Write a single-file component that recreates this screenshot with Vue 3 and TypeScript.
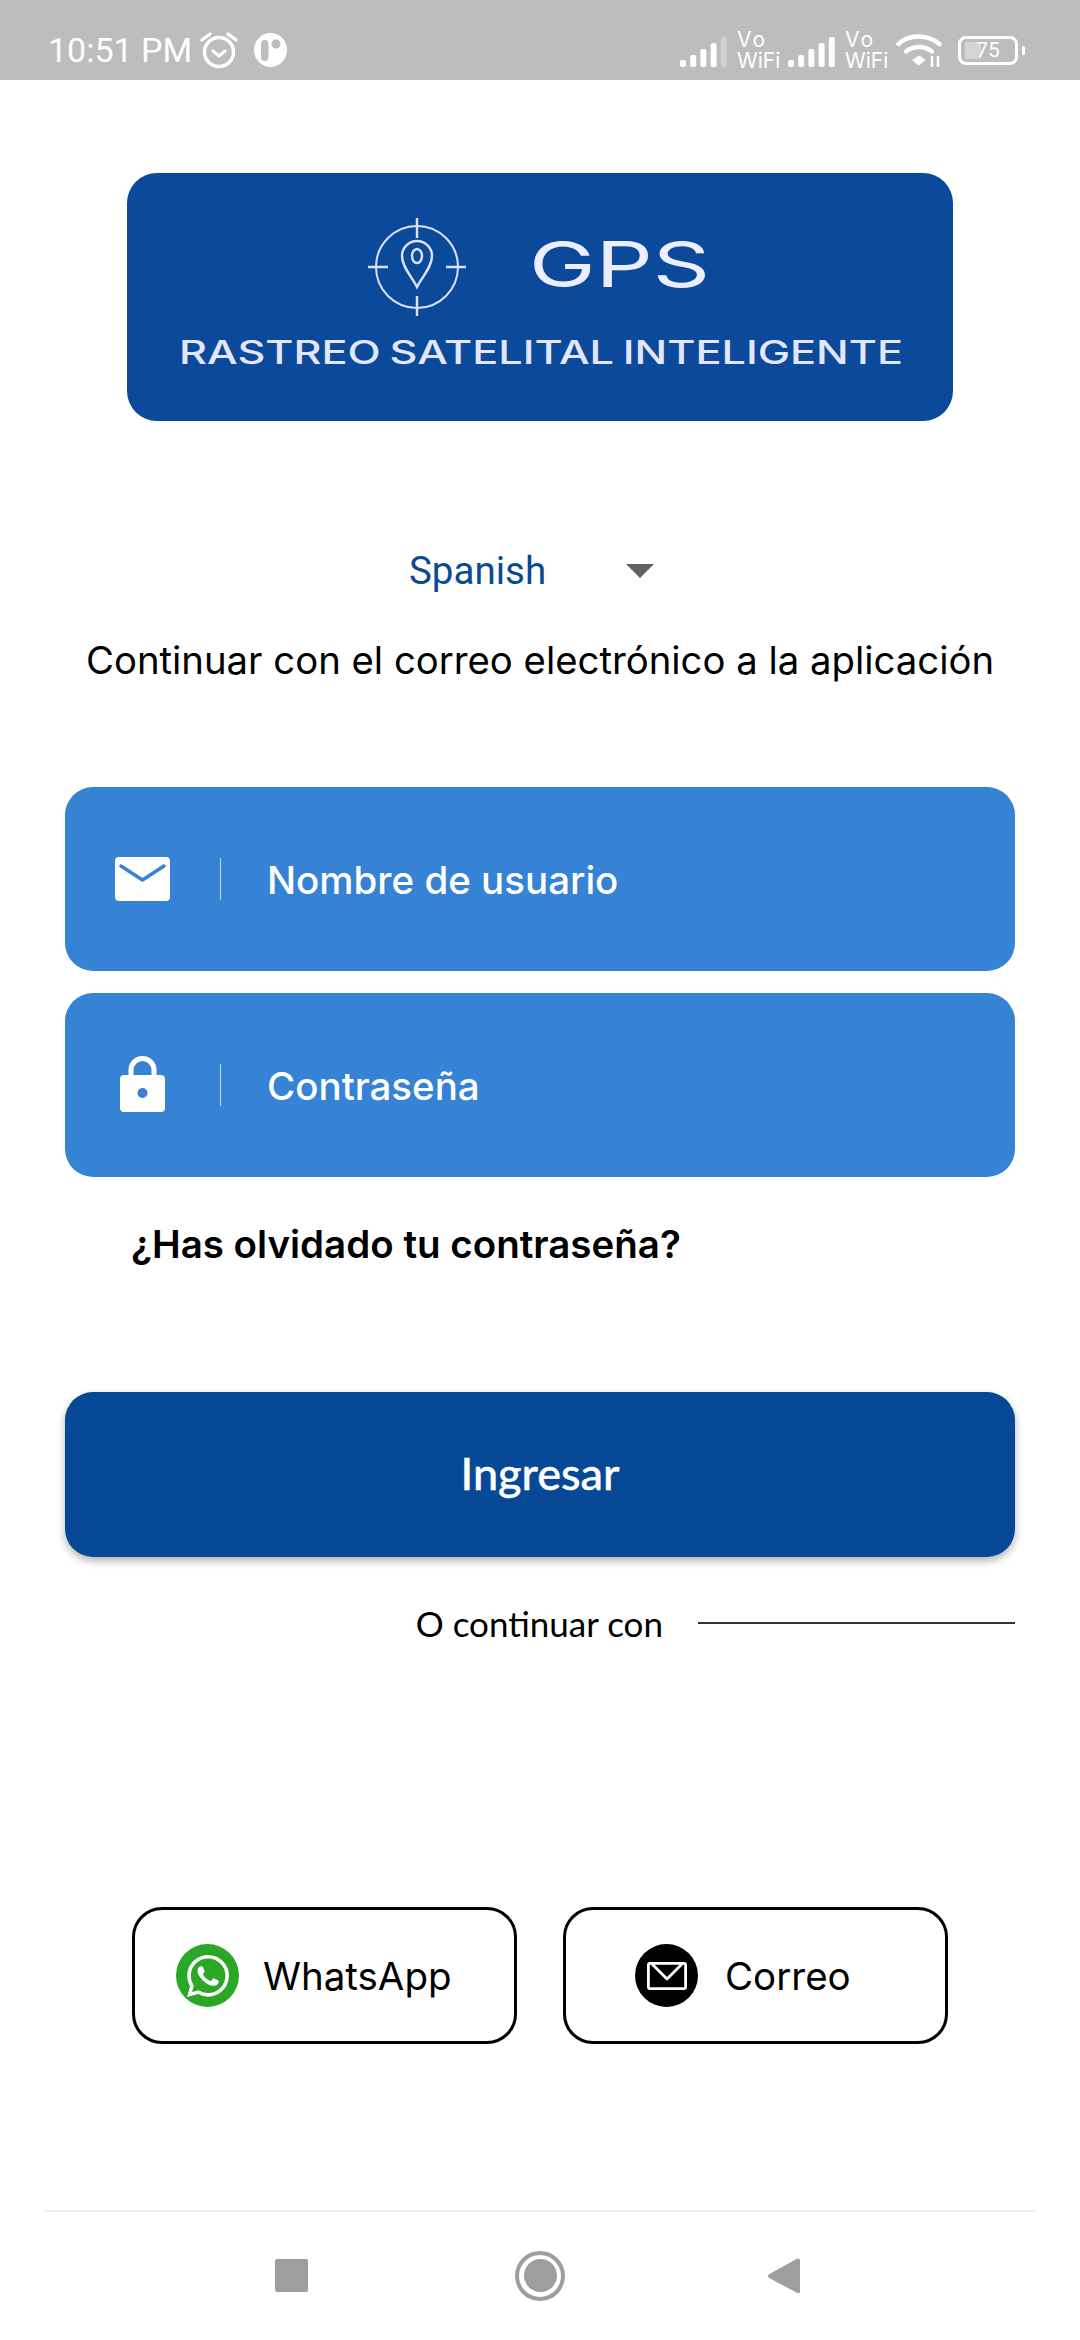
<script setup lang="ts">
const signalBars = [7, 12, 18, 24, 30]
</script>

<template>
  <div class="page">
    <header class="status">
      <div class="status-left">
        <span class="time">10:51 PM</span>
        <svg class="alarm" viewBox="0 0 40 38" fill="none" stroke="#fff">
          <circle cx="20" cy="21" r="14.5" stroke-width="3.4" />
          <path d="M14 20l6 5 6-5" stroke-width="3" stroke-linecap="round" stroke-linejoin="round" />
          <path d="M3 9l8-6M37 9l-8-6" stroke-width="3.4" stroke-linecap="round" />
        </svg>
        <svg class="dot-app" viewBox="0 0 33 34">
          <ellipse cx="16.5" cy="17" rx="16.5" ry="17" fill="#fff" />
          <rect x="7" y="7" width="7.5" height="21" rx="3.7" fill="#bdbdbd" />
          <circle cx="22" cy="11" r="4.5" fill="#bdbdbd" />
        </svg>
      </div>
      <div class="status-right">
        <svg class="signal" viewBox="0 0 47 30">
          <rect v-for="(h, i) in signalBars" :key="i" :x="i * 10.2" :y="30 - h" width="6" :height="h" rx="2" :fill="i === 4 ? '#d2d2d2' : '#fff'" />
        </svg>
        <div class="vo"><span class="vo-top">Vo</span><span>WiFi</span></div>
        <svg class="signal" viewBox="0 0 47 30">
          <rect v-for="(h, i) in signalBars" :key="i" :x="i * 10.2" :y="30 - h" width="6" :height="h" rx="2" fill="#fff" />
        </svg>
        <div class="vo"><span class="vo-top">Vo</span><span>WiFi</span></div>
        <svg class="wifi" viewBox="0 0 46 34" fill="none" stroke="#fff" stroke-linecap="round">
          <path d="M2.500 11C13 1 31 1 43.500 11" stroke-width="4.500" />
          <path d="M10 18.500c8-6 18-6 26 0" stroke-width="4.500" />
          <path d="M17 27l6-4 6 4-6 5z" fill="#fff" stroke-width="1" />
          <path d="M36 24v9M42 24v9" stroke-width="2.500" />
        </svg>
        <div class="battery">
          <div class="battery-body"><span class="battery-fill"></span><span class="battery-num">75</span></div>
          <span class="battery-nub"></span>
        </div>
      </div>
    </header>

    <main class="main">
      <div class="logo">
        <svg viewBox="0 0 826 248" width="826" height="248">
          <g fill="none" stroke="#dfe0ff" stroke-width="2">
            <circle cx="290" cy="94" r="41" />
            <path d="M290 45v20M290 123v20M241 94h20M319 94h20" stroke-width="2.4" />
            <path d="M290 114c-5-10-15-20-15-31a15 15 0 0 1 30 0c0 11-10 21-15 31z" stroke-width="2.4" />
            <ellipse cx="290" cy="83" rx="5" ry="7" stroke-width="2.4" />
          </g>
          <text x="402" y="114" class="gps" textLength="181" lengthAdjust="spacingAndGlyphs">GPS</text>
          <text x="52" y="191" class="tag" textLength="724" lengthAdjust="spacingAndGlyphs">RASTREO SATELITAL INTELIGENTE</text>
        </svg>
      </div>

      <div class="lang">
        <span class="lang-name">Spanish</span>
        <span class="caret"></span>
      </div>
      <p class="subtitle">Continuar con el correo electrónico a la aplicación</p>

      <div class="field first">
        <span class="field-icon">
          <svg width="55" height="44" viewBox="0 0 55 44">
            <rect width="55" height="44" rx="4" fill="#fff" />
            <path d="M6 9l21.500 14L49 9" fill="none" stroke="#3683d5" stroke-width="3.500" stroke-linecap="round" stroke-linejoin="round" />
          </svg>
        </span>
        <span class="field-sep"></span>
        <span class="field-label">Nombre de usuario</span>
      </div>
      <div class="field">
        <span class="field-icon lock">
          <svg width="45" height="57" viewBox="0 0 45 57">
            <path d="M11 24v-9a11.500 11.500 0 0 1 23 0v9" fill="none" stroke="#fff" stroke-width="5" />
            <rect y="20" width="45" height="37" rx="4" fill="#fff" />
            <circle cx="22.500" cy="38" r="5" fill="#3683d5" />
          </svg>
        </span>
        <span class="field-sep"></span>
        <span class="field-label">Contraseña</span>
      </div>

      <p class="forgot">¿Has olvidado tu contraseña?</p>

      <button class="submit" type="button">Ingresar</button>

      <div class="or">
        <span class="or-text">O continuar con</span>
        <span class="or-line"></span>
      </div>

      <div class="social">
        <div class="social-btn wa">
          <span class="badge green">
            <svg width="42" height="42" viewBox="0 0 24 24" fill="#fff">
              <path d="M17.472 14.382c-.297-.149-1.758-.867-2.03-.967-.273-.099-.471-.148-.67.15-.197.297-.767.966-.94 1.164-.173.199-.347.223-.644.075-.297-.15-1.255-.463-2.39-1.475-.883-.788-1.48-1.761-1.653-2.059-.173-.297-.018-.458.13-.606.134-.133.298-.347.446-.52.149-.174.198-.298.298-.497.099-.198.05-.371-.025-.52-.075-.149-.669-1.612-.916-2.207-.242-.579-.487-.5-.669-.51-.173-.008-.371-.01-.57-.01-.198 0-.52.074-.792.372-.272.297-1.04 1.016-1.04 2.479 0 1.462 1.065 2.875 1.213 3.074.149.198 2.096 3.2 5.077 4.487.709.306 1.262.489 1.694.625.712.227 1.36.195 1.871.118.571-.085 1.758-.719 2.006-1.413.248-.694.248-1.289.173-1.413-.074-.124-.272-.198-.57-.347m-5.421 7.403h-.004a9.87 9.87 0 01-5.031-1.378l-.361-.214-3.741.982.998-3.648-.235-.374a9.86 9.86 0 01-1.51-5.26c.001-5.45 4.436-9.884 9.888-9.884 2.64 0 5.122 1.03 6.988 2.898a9.825 9.825 0 012.893 6.994c-.003 5.45-4.437 9.884-9.885 9.884m8.413-18.297A11.815 11.815 0 0012.05 0C5.495 0 .16 5.335.157 11.892c0 2.096.547 4.142 1.588 5.945L.057 24l6.305-1.654a11.882 11.882 0 005.683 1.448h.005c6.554 0 11.89-5.335 11.893-11.893a11.821 11.821 0 00-3.48-8.413z" />
            </svg>
          </span>
          <span class="social-label">WhatsApp</span>
        </div>
        <div class="social-btn mail">
          <span class="badge black">
            <svg width="40" height="28" viewBox="0 0 40 28" fill="none" stroke="#fff" stroke-width="2.800">
              <rect x="1.400" y="1.400" width="37.200" height="25.200" rx="1.500" />
              <path d="M5 2l15 15L35 2" stroke-linejoin="round" />
            </svg>
          </span>
          <span class="social-label">Correo</span>
        </div>
      </div>
    </main>

    <nav class="nav">
      <span class="nav-square"></span>
      <span class="nav-home"><span class="nav-home-dot"></span></span>
      <svg class="nav-back" width="32" height="38" viewBox="0 0 32 38">
        <path d="M30 1.500c1 0 2 .8 2 2v31c0 1.400-1.300 2.300-2.500 1.600L1 21c-1.300-.8-1.300-3 0-3.800L29 1.800z" fill="#9e9e9e" />
      </svg>
    </nav>
  </div>
</template>

<style scoped>
.page {
  width: 1080px;
  height: 2340px;
  background: #fff;
  overflow: hidden;
  font-family: Inter, "Liberation Sans", sans-serif;
  color: #000;
}

.status {
  height: 80px;
  background: #bdbdbd;
  display: flex;
  justify-content: space-between;
  align-items: center;
  padding: 20px 55px 0 48px;
  box-sizing: border-box;
  color: #fff;
}
.status-left,
.status-right {
  display: flex;
  align-items: center;
}
.time {
  font-family: Roboto, sans-serif;
  font-size: 34px;
  line-height: 40px;
  width: 151px;
}
.alarm {
  width: 40px;
  height: 38px;
}
.dot-app {
  width: 33px;
  height: 34px;
  margin-left: 15px;
}
.signal {
  width: 47px;
  height: 30px;
  margin-top: 4px;
}
.vo {
  width: 41px;
  margin-left: 10px;
  margin-right: 10px;
  display: flex;
  flex-direction: column;
  font-family: Inter, sans-serif;
  font-size: 21px;
  line-height: 21px;
}
.vo-top {
  letter-spacing: 2px;
}
.wifi {
  width: 46px;
  height: 34px;
}
.battery {
  display: flex;
  align-items: center;
  margin-left: 16px;
}
.battery-body {
  width: 60px;
  height: 29px;
  border: 3px solid #fff;
  border-radius: 8px;
  box-sizing: border-box;
  position: relative;
  display: flex;
  align-items: center;
  justify-content: center;
}
.battery-fill {
  position: absolute;
  left: 4px;
  top: 3px;
  bottom: 3px;
  width: 16px;
  background: #d5d5d5;
}
.battery-num {
  position: relative;
  font-family: Roboto, sans-serif;
  font-size: 21px;
  line-height: 23px;
}
.battery-nub {
  width: 3px;
  height: 9px;
  margin-left: 4px;
  background: #fff;
  border-radius: 2px;
}

.main {
  padding: 0 65px;
  display: flex;
  flex-direction: column;
}
.logo {
  width: 826px;
  height: 248px;
  margin: 93px auto 0;
  background: #0b4a9a;
  border-radius: 30px;
  overflow: hidden;
}
.gps {
  font-family: Inter, sans-serif;
  font-size: 63px;
  font-weight: 400;
  fill: #eceeff;
}
.tag {
  font-family: Inter, sans-serif;
  font-size: 32px;
  font-weight: 500;
  word-spacing: -2px;
  fill: #e4e5ff;
}

.lang {
  margin-top: 118px;
  height: 60px;
  display: flex;
  align-items: center;
  padding-left: 344px;
}
.lang-name {
  font-family: Roboto, sans-serif;
  font-size: 38.5px;
  color: #0a4a8f;
  width: 217px;
  padding-top: 2px;
}
.caret {
  width: 0;
  height: 0;
  margin-top: 4px;
  border-left: 14px solid transparent;
  border-right: 14px solid transparent;
  border-top: 14px solid #616161;
}
.subtitle {
  margin: 31px 0 0;
  font-size: 38.3px;
  line-height: 60px;
  text-align: center;
  white-space: nowrap;
}

.field {
  height: 184px;
  margin-top: 22px;
  background: #3683d5;
  border-radius: 28px;
  display: flex;
  align-items: center;
  color: #fff;
}
.field.first {
  margin-top: 97px;
}
.field-icon {
  width: 155px;
  display: flex;
  justify-content: center;
  box-sizing: border-box;
}
.field-icon.lock {
  margin-top: -3px;
}
.field-sep {
  width: 1px;
  height: 42px;
  background: rgba(255, 255, 255, 0.7);
}
.field-label {
  margin-left: 46px;
  padding-top: 2px;
  font-size: 38.5px;
  font-weight: 500;
}

.forgot {
  margin: 37px 0 0 66px;
  font-size: 38.5px;
  font-weight: 600;
  line-height: 60px;
}

.submit {
  margin-top: 118px;
  height: 165px;
  padding-bottom: 4px;
  border: none;
  border-radius: 28px;
  background: #074897;
  color: #fff;
  font-family: Lato, sans-serif;
  font-size: 45px;
  font-weight: 500;
  -webkit-text-stroke: 0.4px #fff;
  box-shadow: 0 4px 8px rgba(0, 0, 0, 0.3);
}

.or {
  margin-top: 41px;
  height: 50px;
  display: flex;
  align-items: center;
  justify-content: flex-end;
}
.or-text {
  font-family: Lato, sans-serif;
  font-size: 35px;
  margin-right: 35px;
}
.or-line {
  width: 317px;
  height: 1.500px;
  background: #333;
}

.social {
  margin-top: 259px;
  display: flex;
  justify-content: center;
  gap: 46px;
}
.social-btn {
  width: 385px;
  height: 137px;
  box-sizing: border-box;
  border: 3px solid #000;
  border-radius: 30px;
  display: flex;
  align-items: center;
}
.social-btn.wa {
  padding-left: 41px;
}
.social-btn.mail {
  padding-left: 69px;
}
.badge {
  width: 63px;
  height: 63px;
  border-radius: 50%;
  display: flex;
  align-items: center;
  justify-content: center;
}
.badge.green {
  background: #2ba727;
}
.badge.black {
  background: #000;
}
.social-label {
  font-size: 38.500px;
  margin-left: 24px;
  padding-top: 1px;
}
.social-btn.mail .social-label {
  margin-left: 27px;
}

.nav {
  margin: 166px 44px 0;
  height: 129px;
  border-top: 2px solid #ececec;
  box-sizing: border-box;
  display: flex;
  align-items: center;
  justify-content: space-between;
  padding: 0 236px 0 231px;
}
.nav-square {
  width: 33px;
  height: 33px;
  background: #9e9e9e;
  border-radius: 2px;
}
.nav-home {
  width: 50px;
  height: 50px;
  margin-left: 4px;
  box-sizing: border-box;
  border: 4px solid #9e9e9e;
  border-radius: 50%;
  display: flex;
  align-items: center;
  justify-content: center;
}
.nav-home-dot {
  width: 33px;
  height: 33px;
  background: #9e9e9e;
  border-radius: 50%;
}
</style>
